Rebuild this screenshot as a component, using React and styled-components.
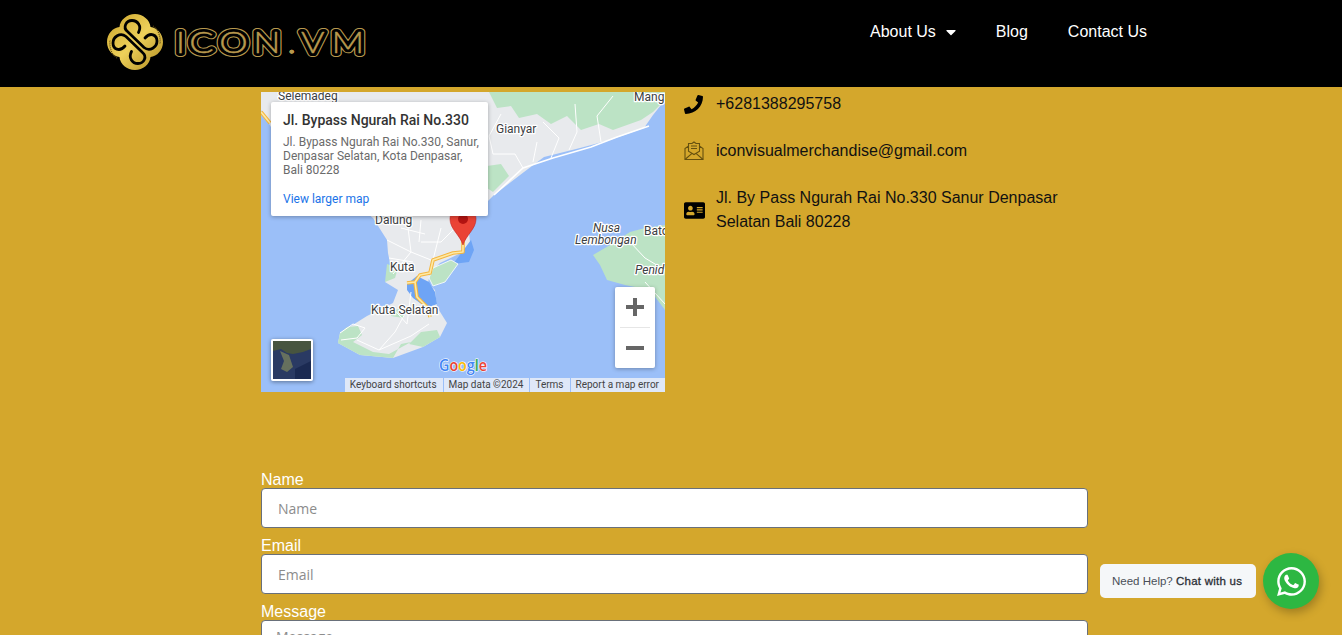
import React from 'react'
import styled, { createGlobalStyle } from 'styled-components'
import { FaPhone, FaAddressCard, FaWhatsapp, FaCaretDown } from 'react-icons/fa'

const GOLD = '#d4a72c'

const GlobalStyle = createGlobalStyle`
html, body {
    margin: 0;
    padding: 0;
    height: 100%;
    overflow: hidden;
    background: ${GOLD};
    font-family: 'Liberation Sans', Arial, sans-serif;
}
* { box-sizing: border-box; }
`
const Page = styled.div`
height: 100vh;
overflow: hidden;
background: ${GOLD};
`
const Header = styled.header`
height: 87px;
background: #000;
display: flex;
justify-content: space-between;
align-items: flex-start;
padding: 0 195px 0 107px;
`
const LogoMark = styled.svg`
display: block;
margin-top: 12px;
use { vector-effect: non-scaling-stroke; }
`
const Nav = styled.nav`
display: flex;
gap: 40px;
padding-top: 23px;
`
const NavLink = styled.a`
display: flex;
align-items: center;
gap: 7px;
color: #fff;
font-size: 16px;
line-height: 18px;
svg { margin-right: -3px; }
`
const Main = styled.main`
width: 827px;
margin-left: 261px;
padding-top: 5px;
`
const TopRow = styled.section`
display: flex;
align-items: flex-start;
`
const MapFrame = styled.div`
position: relative;
flex: 0 0 404px;
height: 300px;
background: #9bbff8;
overflow: hidden;
font-family: Roboto, sans-serif;
`
const MapArt = styled.svg`
display: block;
`
const MapLabel = styled.text`
font-family: Roboto, sans-serif;
font-size: ${p => p.$size || 12}px;
font-style: ${p => (p.$water ? 'italic' : 'normal')};
fill: #3c4043;
stroke: #fff;
stroke-width: 2.5px;
paint-order: stroke;
stroke-linejoin: round;
`
const Popup = styled.div`
position: absolute;
left: 10px;
top: 10px;
width: 217px;
height: 114px;
padding: 10px 8px 0 12px;
background: #fff;
border-radius: 2px;
box-shadow: 0 1px 4px rgba(0, 0, 0, .3);
`
const PopupTitle = styled.div`
font-size: 14px;
font-weight: 500;
line-height: 17px;
color: #333;
white-space: nowrap;
`
const PopupAddress = styled.div`
margin-top: 6px;
font-size: 12px;
line-height: 14px;
color: #6b6b6b;
`
const PopupLink = styled.a`
display: block;
margin-top: 15px;
font-size: 12px;
line-height: 14px;
color: #1a73e8;
`
const ZoomControl = styled.div`
position: absolute;
left: 354px;
top: 195px;
width: 40px;
height: 81px;
display: flex;
flex-direction: column;
background: #fff;
border-radius: 2px;
box-shadow: 0 1px 4px rgba(0, 0, 0, .3);
`
const ZoomButton = styled.div`
flex: 1;
display: flex;
align-items: center;
justify-content: center;
`
const ZoomDivider = styled.div`
height: 1px;
margin: 0 5px;
background: #e6e6e6;
`
const SatelliteThumb = styled.div`
position: absolute;
left: 10px;
top: 247px;
width: 42px;
height: 42px;
border: 2px solid #fff;
border-radius: 2px;
overflow: hidden;
box-shadow: 0 1px 4px rgba(0, 0, 0, .4);
`
const Attribution = styled.div`
position: absolute;
right: 0;
bottom: 0;
height: 14px;
display: flex;
gap: 1px;
`
const AttributionItem = styled.span`
padding: 0 6px 0 5px;
font-size: 10px;
line-height: 14px;
color: #444;
background: #dfe8f8;
white-space: nowrap;
`
const Contacts = styled.ul`
list-style: none;
margin: 0 0 0 19px;
padding: 0;
width: 392px;
display: flex;
flex-direction: column;
gap: 23px;
`
const ContactRow = styled.li`
display: flex;
align-items: center;
font-size: 16px;
line-height: 24px;
color: #111;
`
const ContactIcon = styled.span`
flex: 0 0 32px;
display: flex;
align-items: center;
color: #000;
`
const Form = styled.form`
margin-top: 80px;
display: flex;
flex-direction: column;
gap: 10px;
`
const Field = styled.label`
display: block;
color: #fff;
font-size: 16px;
line-height: 16px;
`
const TextInput = styled.input`
display: block;
width: 100%;
height: 40px;
padding: 0 16px;
background: #fff;
border: 1px solid #69707a;
border-radius: 4px;
font-family: 'Open Sans', sans-serif;
font-size: 14px;
&::placeholder { color: #8c8c8c; opacity: 1; }
`
const TextArea = styled.textarea`
display: block;
width: 100%;
height: 120px;
padding: 6px 14px;
background: #fff;
border: 1px solid #69707a;
border-radius: 4px;
font-family: 'Open Sans', sans-serif;
font-size: 14px;
resize: none;
&::placeholder { color: #8c8c8c; opacity: 1; }
`
const ChatWidget = styled.div`
position: fixed;
right: 23px;
bottom: 26px;
display: flex;
align-items: center;
gap: 7px;
`
const ChatBubble = styled.div`
width: 156px;
height: 34px;
padding-left: 12px;
background: #f5f7f9;
border-radius: 5px;
font-size: 11.5px;
line-height: 34px;
color: #4a4f58;
white-space: nowrap;
strong {
    font-weight: 400;
    color: #2b2f36;
    -webkit-text-stroke: .3px #2b2f36;
    letter-spacing: .25px;
}
`
const ChatButton = styled.div`
width: 56px;
height: 56px;
display: flex;
align-items: center;
justify-content: center;
border-radius: 50%;
background: #2db742;
color: #fff;
box-shadow: 2px 4px 10px rgba(0, 0, 0, .25);
`

const Logo = () => (
    <LogoMark width="260" height="60" viewBox="0 0 260 60">
        <defs>
            <linearGradient id="knotGold" x1="0" y1="0" x2="1" y2="1">
                <stop offset="0" stopColor="#c9a228" />
                <stop offset=".5" stopColor="#edd05a" />
                <stop offset="1" stopColor="#b08a1e" />
            </linearGradient>
            <path id="knotLine" d="M31.5 18.500C35 12 30.500 6.500 25 6.500 19 6.500 15.500 13.500 20.500 17.500L37 33.500C43 38 50 33 50 27 50 21 43.500 17.500 38 24" />
            <text id="logoWord" x="57.300 68.500 93.500 121.800 150.500 161.700 187" y="41" fontFamily="Lato, sans-serif" fontWeight="300" fontSize="30">
                ICON<tspan stroke="#b8994e" strokeWidth=".8">.</tspan>VM
            </text>
        </defs>
        <g transform="translate(0 2)">
            <path d="M28 0C36 0 43 6 43.500 13 50 13.500 56 20 56 28 56 36 50 42.500 43.500 43 43 50 36 56 28 56 20 56 13 50 12.500 43 6 42.500 0 36 0 28 0 20 6 13.500 12.500 13 13 6 20 0 28 0Z" fill="url(#knotGold)" />
            <g fill="none" stroke="#000" strokeWidth="2.8" strokeLinecap="round">
                <use href="#knotLine" />
                <use href="#knotLine" transform="rotate(180 28 28)" />
            </g>
            <g fill="none" stroke="#5a4610" strokeWidth="1.2" strokeDasharray="1 1">
                <path d="M46 12C51 15 54 22 53 30M10 44C5 41 2 34 3 26" />
            </g>
        </g>
        <g fill="none" strokeLinejoin="round" transform="scale(1.2 1)">
            <use href="#logoWord" stroke="#b8994e" strokeWidth="8" />
            <use href="#logoWord" stroke="#000" strokeWidth="6" />
            <use href="#logoWord" fill="#b8994e" stroke="#b8994e" strokeWidth=".4" />
        </g>
    </LogoMark>
)

const MapDrawing = () => (
    <MapArt width="404" height="300" viewBox="0 0 404 300">
        <rect width="404" height="300" fill="#9bbff8" />
        {/* Bali */}
        <path fill="#e8eaed" d="M0 0H404V8L392 23 383 36 349 48 319 56 283 65 263 80 233 103 216 120 207 132 209 150 202 160 179 171 169 181 167 191 174 198 176 215 186 231 179 245 162 255 132 266 99 263 77 251 79 241 106 224 132 211 137 198 124 190 131 181 127 161 126 148 112 126 80 100 10 35 0 18Z" />
        <path fill="#bce3c5" d="M228 0H404V8L392 20 380 28 352 38 338 32 320 38 306 24 290 32 276 22 258 26 250 14 236 16ZM226 74L240 72 248 84 232 100 226 96Z" />
        <path fill="#bce3c5" d="M77 251L79 241 86 235 97 234 101 243 92 250 112 260 128 262 150 250 140 252 132 266 99 263ZM162 255L148 252 160 240 176 238 179 245ZM132 218L146 216 142 226 130 224ZM126 172L137 176 134 186 124 190Z" />
        <path fill="#6ea4f5" d="M192 172L210 148 213 158 208 170ZM146 192L156 184 168 190 174 200 176 212 166 216 152 206 146 198Z" />
        <path fill="#bce3c5" stroke="#fff" strokeWidth=".8" d="M172 176L190 168 197 172 184 190 172 194 168 186Z" />
        {/* Nusa Penida */}
        <path fill="#bce3c5" d="M404 133L384 136 369 140 349 153 332 163 339 173 346 188 364 193 389 198 404 218Z" />
        <path fill="none" stroke="#fff" strokeWidth="1" d="M369 150L384 166 404 178M384 190L404 212" />
        {/* roads */}
        <g fill="none" stroke="#fff" strokeWidth="1">
            <path d="M233 103L262 76 292 66 330 55 356 45 388 34" strokeWidth="1.600" />
            <path d="M262 76L254 62 232 62 228 44 240 22M290 66L298 46 282 30M308 58L316 40 314 12M340 50L336 24 352 4M272 70L276 50" />
            <path d="M126 148L150 160 170 168M146 128L150 160 132 182M180 136L172 168M196 134L180 150 160 150M128 166L152 170M140 136L164 142M160 128L158 150" />
            <path d="M79 241L92 232 104 236 96 246 80 248M96 248L118 258 150 244 168 232M146 218L134 240 118 258M150 200L146 232 130 214" />
        </g>
        <path fill="none" stroke="#f4b63f" strokeWidth="3.600" strokeLinejoin="round" d="M202 148V160L192 161 172 168 169 181 159 183 154 190 156 205 167 216 169 225M146 191L154 190M0 20L9 31" />
        <path fill="none" stroke="#fee9a6" strokeWidth="1.600" strokeLinejoin="round" d="M202 148V160L192 161 172 168 169 181 159 183 154 190 156 205 167 216 169 225M146 191L154 190M0 20L9 31" />
        {/* pin */}
        <path fill="#ea4335" stroke="#c5221f" strokeWidth=".6" d="M202 153C199 143 189 137 189 127 189 120 195 114 202 114 209 114 215 120 215 127 215 137 205 143 202 153Z" />
        <circle cx="202" cy="127" r="5" fill="#b31412" />
        <MapLabel x="17" y="8">Selemadeg</MapLabel>
        <MapLabel x="373" y="9">Mang</MapLabel>
        <MapLabel x="235" y="41">Gianyar</MapLabel>
        <MapLabel x="114" y="132">Dalung</MapLabel>
        <MapLabel x="332" y="140" $water>Nusa</MapLabel>
        <MapLabel x="314" y="152" $water>Lembongan</MapLabel>
        <MapLabel x="383" y="143">Bato</MapLabel>
        <MapLabel x="374" y="182" $water>Penid</MapLabel>
        <MapLabel x="129" y="179">Kuta</MapLabel>
        <MapLabel x="110" y="222">Kuta Selatan</MapLabel>
        <text x="178" y="279" textLength="48" lengthAdjust="spacingAndGlyphs" fontFamily="'Open Sans', sans-serif" fontWeight="600" fontSize="16" stroke="#fff" strokeWidth="1.200" paintOrder="stroke">
            <tspan fill="#4285f4">G</tspan>
            <tspan fill="#ea4335">o</tspan>
            <tspan fill="#fbbc05">o</tspan>
            <tspan fill="#4285f4">g</tspan>
            <tspan fill="#34a853">l</tspan>
            <tspan fill="#ea4335">e</tspan>
        </text>
    </MapArt>
)

const EnvelopeIcon = () => (
    <svg width="20" height="20" viewBox="0 0 20 20" fill="none" stroke="#65500f" strokeWidth="1.100">
        <path d="M1 7.500V18.500H19V7.500L15.500 5V10.200L10 13.500 4.500 10.200V5Z" />
        <path d="M4.500 5V2.500H8L10 1 12 2.500H15.500V5M1 18.500L8 12.300M19 18.500L12 12.300M7 5H13M7 7.500H13" />
    </svg>
)

const SatelliteArt = () => (
    <svg width="38" height="38" viewBox="0 0 38 38">
        <rect width="38" height="38" fill="#2a3a63" />
        <path fill="#47543f" d="M0 0H38V8L30 11 20 13 14 12 8 8 0 10Z" />
        <path fill="#66705e" d="M7 10L16 14 20 26 14 31 8 28 11 20Z" />
        <path fill="#1b2a52" d="M22 28L38 20V38H22Z" />
    </svg>
)

export default function App() {
    return (
        <Page>
            <GlobalStyle />
            <Header>
                <Logo />
                <Nav>
                    <NavLink>About Us <FaCaretDown size={16} /></NavLink>
                    <NavLink>Blog</NavLink>
                    <NavLink>Contact Us</NavLink>
                </Nav>
            </Header>
            <Main>
                <TopRow>
                    <MapFrame>
                        <MapDrawing />
                        <Popup>
                            <PopupTitle>Jl. Bypass Ngurah Rai No.330</PopupTitle>
                            <PopupAddress>Jl. Bypass Ngurah Rai No.330, Sanur, Denpasar Selatan, Kota Denpasar, Bali 80228</PopupAddress>
                            <PopupLink>View larger map</PopupLink>
                        </Popup>
                        <SatelliteThumb><SatelliteArt /></SatelliteThumb>
                        <ZoomControl>
                            <ZoomButton>
                                <svg width="18" height="18" viewBox="0 0 18 18"><path fill="#666" d="M7 0H11V7H18V11H11V18H7V11H0V7H7Z" /></svg>
                            </ZoomButton>
                            <ZoomDivider />
                            <ZoomButton>
                                <svg width="18" height="4" viewBox="0 0 18 4"><rect width="18" height="4" fill="#666" /></svg>
                            </ZoomButton>
                        </ZoomControl>
                        <Attribution>
                            <AttributionItem>Keyboard shortcuts</AttributionItem>
                            <AttributionItem>Map data ©2024</AttributionItem>
                            <AttributionItem>Terms</AttributionItem>
                            <AttributionItem>Report a map error</AttributionItem>
                        </Attribution>
                    </MapFrame>
                    <Contacts>
                        <ContactRow>
                            <ContactIcon><FaPhone size={19} /></ContactIcon>
                            +6281388295758
                        </ContactRow>
                        <ContactRow>
                            <ContactIcon><EnvelopeIcon /></ContactIcon>
                            iconvisualmerchandise@gmail.com
                        </ContactRow>
                        <ContactRow>
                            <ContactIcon><FaAddressCard size={21} /></ContactIcon>
                            <span>Jl. By Pass Ngurah Rai No.330 Sanur Denpasar Selatan Bali 80228</span>
                        </ContactRow>
                    </Contacts>
                </TopRow>
                <Form>
                    <Field>Name<TextInput placeholder="Name" /></Field>
                    <Field>Email<TextInput placeholder="Email" /></Field>
                    <Field>Message<TextArea placeholder="Message" /></Field>
                </Form>
            </Main>
            <ChatWidget>
                <ChatBubble>Need Help? <strong>Chat with us</strong></ChatBubble>
                <ChatButton><FaWhatsapp size={33} /></ChatButton>
            </ChatWidget>
        </Page>
    )
}
